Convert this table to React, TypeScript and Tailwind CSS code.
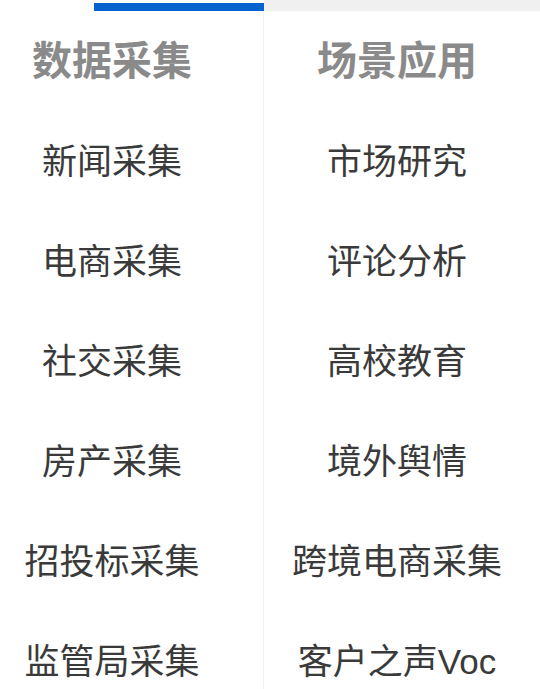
import React from "react";

const left = ["新闻采集", "电商采集", "社交采集", "房产采集", "招投标采集", "监管局采集"];
const right = ["市场研究", "评论分析", "高校教育", "境外舆情", "跨境电商采集", "客户之声Voc"];

const font = { fontFamily: '"Liberation Sans", "Noto Sans CJK SC", sans-serif' };

export default function App() {
  return (
    <div className="w-[540px] h-[689px] bg-white overflow-hidden" style={font}>
      <div className="flex h-[11px]">
        <div className="w-[94px]" />
        <div className="w-[170px] mt-[3px] h-[8px] bg-[#0662cc]" />
        <div className="flex-1 bg-[#f0f0f0]" />
      </div>
      <div className="flex">
        <div className="w-[263px] pr-[39px] flex flex-col items-center">
          <div className="h-[99px] mb-[2px] flex items-center text-[40px] font-bold text-[#8a8a8a]">数据采集</div>
          {left.map((t) => (
            <div key={t} className="h-[100px] flex items-center text-[35px] text-[#3a3a3a]">
              {t}
            </div>
          ))}
        </div>
        <div className="flex-1 border-l border-[#f2f2f2] pr-[10px] flex flex-col items-center">
          <div className="h-[99px] mb-[2px] flex items-center text-[40px] font-bold text-[#8a8a8a]">场景应用</div>
          {right.map((t) => (
            <div key={t} className="h-[100px] flex items-center text-[35px] text-[#3a3a3a]">
              {t}
            </div>
          ))}
        </div>
      </div>
    </div>
  );
}
